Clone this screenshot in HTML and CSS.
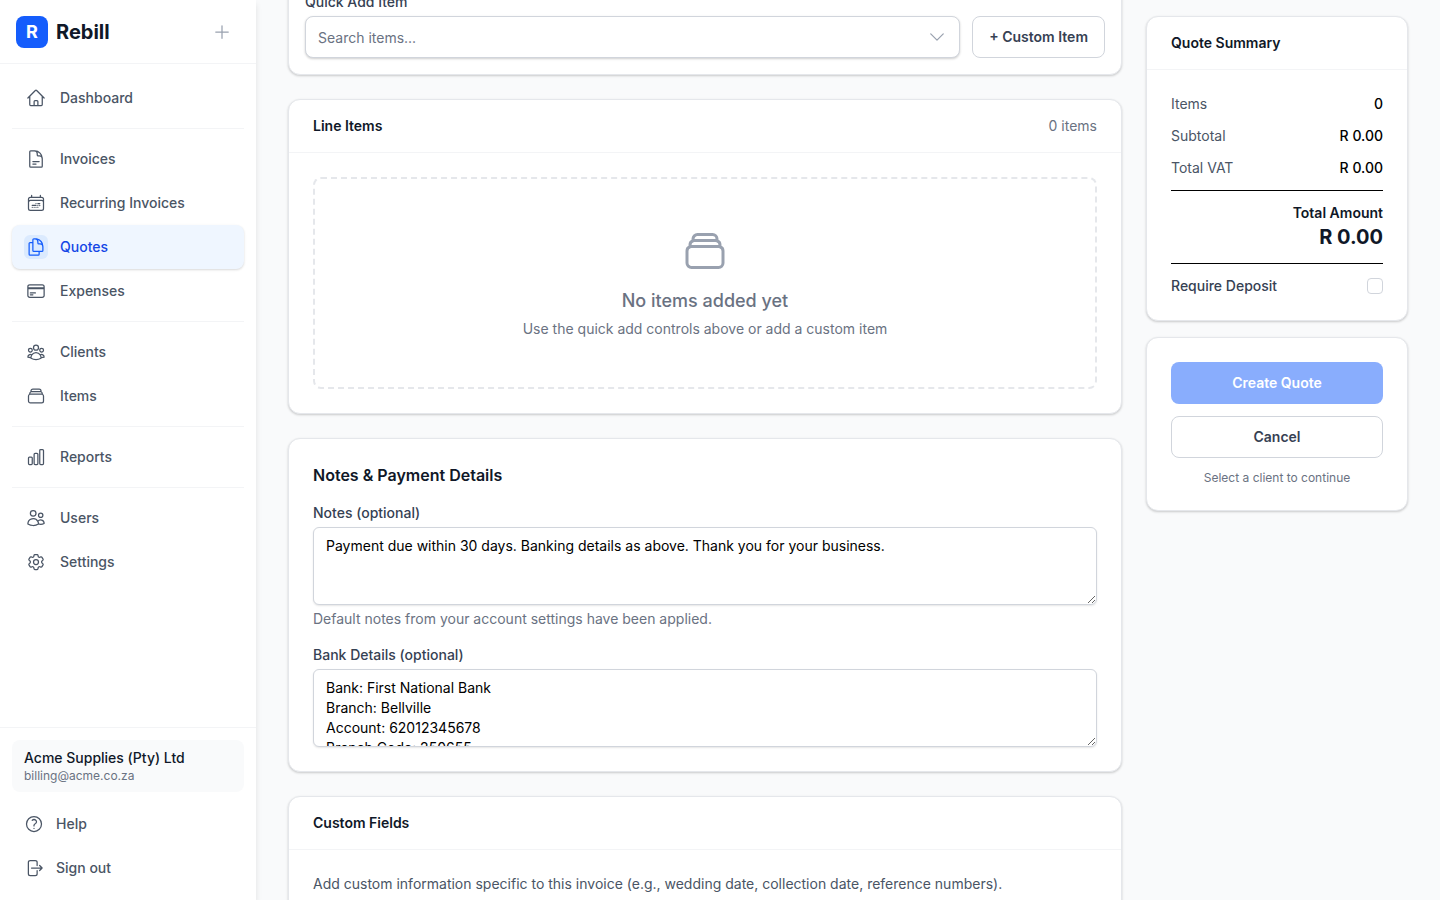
FILE: index.html
```html
<!DOCTYPE html>
<html lang="en">
<head>
<meta charset="UTF-8">
<meta name="viewport" content="width=device-width, initial-scale=1.0">
<title>New Quote - Rebill</title>
<link rel="stylesheet" href="styles.css">
</head>
<body>
<div class="app">
    <aside class="sidebar">
        <div class="sidebar-header">
            <a href="#" class="brand">
                <span class="brand-logo">R</span>
                <span class="brand-name">Rebill</span>
            </a>
            <button class="create-btn" type="button" aria-label="Create new">
                <svg class="icon" viewBox="0 0 24 24"><path d="M12 4.5v15m7.5-7.5h-15"/></svg>
            </button>
        </div>
        <nav class="nav">
            <div class="nav-group">
                <a href="#" class="nav-link">
                    <span class="nav-icon"><svg class="icon" viewBox="0 0 24 24"><path d="m2.25 12 8.954-8.955c.44-.439 1.152-.439 1.591 0L21.75 12M4.5 9.75v10.125c0 .621.504 1.125 1.125 1.125H9.75v-4.875c0-.621.504-1.125 1.125-1.125h2.25c.621 0 1.125.504 1.125 1.125V21h4.125c.621 0 1.125-.504 1.125-1.125V9.75M8.25 21h8.25"/></svg></span>
                    Dashboard
                </a>
            </div>
            <div class="nav-group">
                <a href="#" class="nav-link">
                    <span class="nav-icon"><svg class="icon" viewBox="0 0 24 24"><path d="M19.5 14.25v-2.625a3.375 3.375 0 0 0-3.375-3.375h-1.5A1.125 1.125 0 0 1 13.5 7.125v-1.5a3.375 3.375 0 0 0-3.375-3.375H8.25m0 12.75h7.5m-7.5 3H12M10.5 2.25H5.625c-.621 0-1.125.504-1.125 1.125v17.25c0 .621.504 1.125 1.125 1.125h12.75c.621 0 1.125-.504 1.125-1.125V11.25a9 9 0 0 0-9-9Z"/></svg></span>
                    Invoices
                </a>
                <a href="#" class="nav-link">
                    <span class="nav-icon"><svg class="icon" viewBox="0 0 24 24"><path d="M6.75 2.994v2.25m10.5-2.25v2.25m-14.252 13.5V7.491a2.25 2.25 0 0 1 2.25-2.25h13.5a2.25 2.25 0 0 1 2.25 2.25v11.251m-18 0a2.25 2.25 0 0 0 2.25 2.25h13.5a2.25 2.25 0 0 0 2.25-2.25m-18 0v-7.5a2.25 2.25 0 0 1 2.25-2.25h13.5a2.25 2.25 0 0 1 2.25 2.25v7.5m-6.75-6h2.25m-9 2.25h4.5m.002-2.25h.005v.006H12v-.006Zm-.001 4.5h.006v.006h-.006v-.005Zm-2.25.001h.005v.006H9.75v-.006Zm-2.25 0h.005v.005h-.006v-.005Zm6.75-2.247h.005v.005h-.005v-.005Zm0 2.247h.006v.006h-.006v-.006Zm2.25-2.248h.006V15H16.5v-.005Z"/></svg></span>
                    Recurring Invoices
                </a>
                <a href="#" class="nav-link active">
                    <span class="nav-icon"><svg class="icon" viewBox="0 0 24 24"><path d="M15.75 17.25v3.375c0 .621-.504 1.125-1.125 1.125h-9.75a1.125 1.125 0 0 1-1.125-1.125V7.875c0-.621.504-1.125 1.125-1.125H6.75a9.06 9.06 0 0 1 1.5.124m7.5 10.376h3.375c.621 0 1.125-.504 1.125-1.125V11.25c0-4.46-3.243-8.161-7.5-8.876a9.06 9.06 0 0 0-1.5-.124H9.375c-.621 0-1.125.504-1.125 1.125v3.5m7.5 10.375H9.375a1.125 1.125 0 0 1-1.125-1.125v-9.25m12 6.625v-1.875a3.375 3.375 0 0 0-3.375-3.375h-1.5a1.125 1.125 0 0 1-1.125-1.125v-1.5a3.375 3.375 0 0 0-3.375-3.375H9.75"/></svg></span>
                    Quotes
                </a>
                <a href="#" class="nav-link">
                    <span class="nav-icon"><svg class="icon" viewBox="0 0 24 24"><path d="M2.25 8.25h19.5M2.25 9h19.5m-16.5 5.25h6m-6 2.25h3m-3.75 3h15a2.25 2.25 0 0 0 2.25-2.25V6.75A2.25 2.25 0 0 0 19.5 4.5h-15a2.25 2.25 0 0 0-2.25 2.25v10.5A2.25 2.25 0 0 0 4.5 19.5Z"/></svg></span>
                    Expenses
                </a>
            </div>
            <div class="nav-group">
                <a href="#" class="nav-link">
                    <span class="nav-icon"><svg class="icon" viewBox="0 0 24 24"><path d="M18 18.72a9.094 9.094 0 0 0 3.741-.479 3 3 0 0 0-4.682-2.72m.94 3.198.001.031c0 .225-.012.447-.037.666A11.944 11.944 0 0 1 12 21c-2.17 0-4.207-.576-5.963-1.584A6.062 6.062 0 0 1 6 18.719m12 0a5.971 5.971 0 0 0-.941-3.197m0 0A5.995 5.995 0 0 0 12 12.75a5.995 5.995 0 0 0-5.058 2.772m0 0a3 3 0 0 0-4.681 2.72 8.986 8.986 0 0 0 3.74.477m.94-3.197a5.971 5.971 0 0 0-.94 3.197M15 6.75a3 3 0 1 1-6 0 3 3 0 0 1 6 0Zm6 3a2.25 2.25 0 1 1-4.5 0 2.25 2.25 0 0 1 4.5 0Zm-13.5 0a2.25 2.25 0 1 1-4.5 0 2.25 2.25 0 0 1 4.5 0Z"/></svg></span>
                    Clients
                </a>
                <a href="#" class="nav-link">
                    <span class="nav-icon"><svg class="icon" viewBox="0 0 24 24"><path d="M6 6.878V6a2.25 2.25 0 0 1 2.25-2.25h7.5A2.25 2.25 0 0 1 18 6v.878m-12 0c.235-.083.487-.128.75-.128h10.5c.263 0 .515.045.75.128m-12 0A2.25 2.25 0 0 0 4.5 9v.878m13.5-3A2.25 2.25 0 0 1 19.5 9v.878m0 0a2.246 2.246 0 0 0-.75-.128H5.25c-.263 0-.515.045-.75.128m15 0A2.25 2.25 0 0 1 21 12v6a2.25 2.25 0 0 1-2.25 2.25H5.25A2.25 2.25 0 0 1 3 18v-6c0-.98.626-1.813 1.5-2.122"/></svg></span>
                    Items
                </a>
            </div>
            <div class="nav-group">
                <a href="#" class="nav-link">
                    <span class="nav-icon"><svg class="icon" viewBox="0 0 24 24"><path d="M3 13.125C3 12.504 3.504 12 4.125 12h2.25c.621 0 1.125.504 1.125 1.125v6.75C7.5 20.496 6.996 21 6.375 21h-2.25A1.125 1.125 0 0 1 3 19.875v-6.75ZM9.75 8.625c0-.621.504-1.125 1.125-1.125h2.25c.621 0 1.125.504 1.125 1.125v11.25c0 .621-.504 1.125-1.125 1.125h-2.25a1.125 1.125 0 0 1-1.125-1.125V8.625ZM16.5 4.125c0-.621.504-1.125 1.125-1.125h2.25C20.496 3 21 3.504 21 4.125v15.75c0 .621-.504 1.125-1.125 1.125h-2.25a1.125 1.125 0 0 1-1.125-1.125V4.125Z"/></svg></span>
                    Reports
                </a>
            </div>
            <div class="nav-group">
                <a href="#" class="nav-link">
                    <span class="nav-icon"><svg class="icon" viewBox="0 0 24 24"><path d="M15 19.128a9.38 9.38 0 0 0 2.625.372 9.337 9.337 0 0 0 4.121-.952 4.125 4.125 0 0 0-7.533-2.493M15 19.128v-.003c0-1.113-.285-2.16-.786-3.07M15 19.128v.106A12.318 12.318 0 0 1 8.624 21c-2.331 0-4.512-.645-6.374-1.766l-.001-.109a6.375 6.375 0 0 1 11.964-3.07M12 6.375a3.375 3.375 0 1 1-6.75 0 3.375 3.375 0 0 1 6.75 0Zm8.25 2.25a2.625 2.625 0 1 1-5.25 0 2.625 2.625 0 0 1 5.25 0Z"/></svg></span>
                    Users
                </a>
                <a href="#" class="nav-link">
                    <span class="nav-icon"><svg class="icon" viewBox="0 0 24 24"><path d="M9.594 3.94c.09-.542.56-.94 1.11-.94h2.593c.55 0 1.02.398 1.11.94l.213 1.281c.063.374.313.686.645.87.074.04.147.083.22.127.325.196.72.257 1.075.124l1.217-.456a1.125 1.125 0 0 1 1.37.49l1.296 2.247a1.125 1.125 0 0 1-.26 1.431l-1.003.827c-.293.241-.438.613-.43.992a7.723 7.723 0 0 1 0 .255c-.008.378.137.75.43.991l1.004.827c.424.35.534.955.26 1.43l-1.298 2.247a1.125 1.125 0 0 1-1.369.491l-1.217-.456c-.355-.133-.75-.072-1.076.124a6.47 6.47 0 0 1-.22.128c-.331.183-.581.495-.644.869l-.213 1.281c-.09.543-.56.94-1.11.94h-2.594c-.55 0-1.019-.398-1.11-.94l-.213-1.281c-.062-.374-.312-.686-.644-.87a6.52 6.52 0 0 1-.22-.127c-.325-.196-.72-.257-1.076-.124l-1.217.456a1.125 1.125 0 0 1-1.369-.49l-1.297-2.247a1.125 1.125 0 0 1 .26-1.431l1.004-.827c.292-.24.437-.613.43-.991a6.932 6.932 0 0 1 0-.255c.007-.38-.138-.751-.43-.992l-1.004-.827a1.125 1.125 0 0 1-.26-1.43l1.297-2.247a1.125 1.125 0 0 1 1.37-.491l1.216.456c.356.133.751.072 1.076-.124.072-.044.146-.086.22-.128.332-.183.582-.495.644-.869l.214-1.28ZM15 12a3 3 0 1 1-6 0 3 3 0 0 1 6 0Z"/></svg></span>
                    Settings
                </a>
            </div>
        </nav>
        <div class="sidebar-footer">
            <div class="account">
                <div class="account-name">Acme Supplies (Pty) Ltd</div>
                <div class="account-email">billing@acme.co.za</div>
            </div>
            <a href="#" class="nav-link">
                <svg class="icon" viewBox="0 0 24 24"><path d="M9.879 7.519c1.171-1.025 3.071-1.025 4.242 0 1.172 1.025 1.172 2.687 0 3.712-.203.179-.43.326-.67.442-.745.361-1.45.999-1.45 1.827v.75M21 12a9 9 0 1 1-18 0 9 9 0 0 1 18 0Zm-9 5.25h.008v.008H12v-.008Z"/></svg>
                Help
            </a>
            <button class="nav-link" type="button">
                <svg class="icon" viewBox="0 0 24 24"><path d="M15.75 9V5.25A2.25 2.25 0 0 0 13.5 3h-6a2.25 2.25 0 0 0-2.25 2.25v13.5A2.25 2.25 0 0 0 7.5 21h6a2.25 2.25 0 0 0 2.25-2.25V15m3 0 3-3m0 0-3-3m3 3H9"/></svg>
                Sign out
            </button>
        </div>
    </aside>

    <main class="content">
        <form class="quote-form">
            <div class="form-column">
                <section class="card quick-add">
                    <label for="quick-add">Quick Add Item</label>
                    <div class="quick-add-row">
                        <div class="combobox">
                            <input id="quick-add" type="text" placeholder="Search items..." autocomplete="off">
                            <svg class="icon chevron" viewBox="0 0 24 24"><path d="m19.5 8.25-7.5 7.5-7.5-7.5"/></svg>
                        </div>
                        <button class="btn" type="button">+ Custom Item</button>
                    </div>
                </section>

                <section class="card">
                    <div class="card-header">
                        <h3>Line Items</h3>
                        <span class="item-count">0 items</span>
                    </div>
                    <div class="card-body">
                        <div class="empty-state">
                            <svg class="icon" viewBox="0 0 24 24"><path d="M6 6.878V6a2.25 2.25 0 0 1 2.25-2.25h7.5A2.25 2.25 0 0 1 18 6v.878m-12 0c.235-.083.487-.128.75-.128h10.5c.263 0 .515.045.75.128m-12 0A2.25 2.25 0 0 0 4.5 9v.878m13.5-3A2.25 2.25 0 0 1 19.5 9v.878m0 0a2.246 2.246 0 0 0-.75-.128H5.25c-.263 0-.515.045-.75.128m15 0A2.25 2.25 0 0 1 21 12v6a2.25 2.25 0 0 1-2.25 2.25H5.25A2.25 2.25 0 0 1 3 18v-6c0-.98.626-1.813 1.5-2.122"/></svg>
                            <p class="empty-title">No items added yet</p>
                            <p class="empty-text">Use the quick add controls above or add a custom item</p>
                        </div>
                    </div>
                </section>

                <section class="card card-body">
                    <h2>Notes &amp; Payment Details</h2>
                    <div class="field">
                        <label for="notes">Notes (optional)</label>
                        <textarea id="notes" rows="3">Payment due within 30 days. Banking details as above. Thank you for your business.</textarea>
                        <p class="hint">Default notes from your account settings have been applied.</p>
                    </div>
                    <div class="field">
                        <label for="bank">Bank Details (optional)</label>
                        <textarea id="bank" rows="3">Bank: First National Bank
Branch: Bellville
Account: 62012345678
Branch Code: 250655</textarea>
                    </div>
                </section>

                <section class="card">
                    <div class="card-header">
                        <h3>Custom Fields</h3>
                    </div>
                    <div class="card-body">
                        <p class="card-text">Add custom information specific to this invoice (e.g., wedding date, collection date, reference numbers).</p>
                    </div>
                </section>
            </div>

            <div class="summary-column">
                <section class="card">
                    <div class="card-header">
                        <h3>Quote Summary</h3>
                    </div>
                    <div class="card-body summary">
                        <div class="summary-row"><span>Items</span><strong>0</strong></div>
                        <div class="summary-row"><span>Subtotal</span><strong>R 0.00</strong></div>
                        <div class="summary-row"><span>Total VAT</span><strong>R 0.00</strong></div>
                        <div class="total">
                            <div class="total-label">Total Amount</div>
                            <div class="total-value">R 0.00</div>
                        </div>
                        <div class="summary-row">
                            <label for="deposit">Require Deposit</label>
                            <input id="deposit" type="checkbox">
                        </div>
                    </div>
                </section>

                <section class="card card-body actions">
                    <button class="btn btn-primary" type="submit" disabled>Create Quote</button>
                    <button class="btn" type="button">Cancel</button>
                    <p class="actions-hint">Select a client to continue</p>
                </section>
            </div>
        </form>
    </main>
</div>
</body>
</html>
```
FILE: styles.css
```css
* {
    margin: 0;
    padding: 0;
    box-sizing: border-box;
}

body {
    font-family: Inter, "Liberation Sans", sans-serif;
    font-size: 14px;
    line-height: 20px;
    color: #101828;
    background: #f9fafb;
}

button, input, textarea {
    font: inherit;
}

a {
    color: inherit;
    text-decoration: none;
}

.icon {
    width: 20px;
    height: 20px;
    flex-shrink: 0;
    fill: none;
    stroke: currentColor;
    stroke-width: 1.5;
    stroke-linecap: round;
    stroke-linejoin: round;
}

.app {
    display: flex;
    height: 100vh;
    overflow: hidden;
}

/* SIDEBAR */
.sidebar {
    width: 256px;
    flex-shrink: 0;
    display: flex;
    flex-direction: column;
    background: #fff;
    box-shadow: 0 4px 6px rgba(0, 0, 0, 0.1);
}

.sidebar-header {
    display: flex;
    align-items: center;
    justify-content: space-between;
    height: 64px;
    padding: 0 24px 0 16px;
    border-bottom: 1px solid #f3f4f6;
}

.brand {
    display: flex;
    align-items: center;
    gap: 8px;
}

.brand-logo {
    width: 32px;
    height: 32px;
    border-radius: 8px;
    background: #155dfc;
    color: #fff;
    font-size: 18px;
    font-weight: 700;
    line-height: 32px;
    text-align: center;
}

.brand-name {
    font-size: 20px;
    font-weight: 700;
    line-height: 28px;
}

.create-btn {
    display: flex;
    padding: 0;
    border: none;
    background: none;
    color: #99a1af;
    cursor: pointer;
    width: 20px;
    height: 20px;
}

.nav {
    flex: 1;
    padding: 12px;
}

.nav-group + .nav-group {
    margin-top: 8px;
    padding-top: 8px;
    border-top: 1px solid #f3f4f6;
}

.nav-link {
    display: flex;
    align-items: center;
    gap: 12px;
    width: 100%;
    height: 44px;
    padding: 0 12px;
    border: none;
    border-radius: 8px;
    background: none;
    color: #4a5565;
    font-weight: 500;
    cursor: pointer;
}

.nav-link:hover {
    background: #f9fafb;
}

.nav-icon {
    display: flex;
    padding: 2px;
    border-radius: 6px;
}

.nav-link.active {
    background: #eff6ff;
    color: #1447e6;
    box-shadow: 0 1px 3px rgba(0, 0, 0, 0.1), 0 1px 2px rgba(0, 0, 0, 0.06);
}

.nav-link.active .nav-icon {
    background: #dbeafe;
    color: #155dfc;
}

.sidebar-footer {
    padding: 12px 12px 10px;
    border-top: 1px solid #f3f4f6;
}

.account {
    margin-bottom: 10px;
    padding: 8px 12px;
    border-radius: 8px;
    background: #f9fafb;
}

.account-name {
    font-weight: 500;
}

.account-email {
    font-size: 12px;
    line-height: 16px;
    color: #6a7282;
}

/* CONTENT */
.content {
    flex: 1;
    min-width: 0;
    padding: 0 32px;
}

.quote-form {
    display: grid;
    grid-template-columns: repeat(4, minmax(0, 1fr));
    gap: 24px;
    align-items: start;
}

.form-column {
    grid-column: span 3;
    display: flex;
    flex-direction: column;
    gap: 24px;
    margin-top: -25px;
}

.card {
    background: #fff;
    border: 1px solid #e5e7eb;
    border-radius: 12px;
    box-shadow: 0 1px 3px rgba(0, 0, 0, 0.1), 0 1px 2px rgba(0, 0, 0, 0.1);
}

.card-header {
    display: flex;
    justify-content: space-between;
    padding: 16px 24px;
    border-bottom: 1px solid #f3f4f6;
}

.card-body {
    padding: 24px;
}

h2 {
    font-size: 16px;
    font-weight: 600;
    line-height: 24px;
}

h3 {
    font-size: 14px;
    font-weight: 600;
}

label {
    display: block;
    color: #364153;
    font-weight: 500;
}

/* QUICK ADD */
.quick-add {
    padding: 16px;
}

.quick-add-row {
    display: flex;
    gap: 12px;
    margin-top: 4px;
}

.combobox {
    position: relative;
    flex: 1;
}

.combobox input {
    display: block;
    width: 100%;
    height: 42px;
    padding: 0 40px 0 12px;
    border: 1px solid #d1d5dc;
    border-radius: 8px;
    background: #fff;
    box-shadow: 0 1px 3px rgba(0, 0, 0, 0.1), 0 1px 2px rgba(0, 0, 0, 0.1);
}

.combobox input::placeholder {
    color: #6a7282;
}

.chevron {
    position: absolute;
    right: 13px;
    top: 11px;
    color: #99a1af;
    pointer-events: none;
}

.btn {
    height: 42px;
    padding: 0 16px;
    border: 1px solid #d1d5dc;
    border-radius: 8px;
    background: #fff;
    color: #364153;
    font-weight: 600;
    cursor: pointer;
}

.btn-primary {
    border: none;
    background: #155dfc;
    color: #fff;
}

.btn-primary:disabled {
    opacity: 0.5;
    cursor: not-allowed;
}

/* LINE ITEMS */
.item-count {
    color: #6a7282;
}

.empty-state {
    display: flex;
    flex-direction: column;
    align-items: center;
    padding: 48px 24px;
    border: 2px dashed #e5e7eb;
    border-radius: 8px;
    color: #6a7282;
    text-align: center;
}

.empty-state .icon {
    width: 48px;
    height: 48px;
    color: #99a1af;
}

.empty-title {
    margin-top: 12px;
    font-size: 18px;
    font-weight: 500;
    line-height: 28px;
}

.empty-text {
    margin-top: 4px;
}

/* NOTES */
.field {
    margin-top: 16px;
}

textarea {
    display: block;
    width: 100%;
    height: 78px;
    margin-top: 4px;
    padding: 8px 12px;
    border: 1px solid #d1d5dc;
    border-radius: 6px;
    background: #fff;
    color: #000;
    box-shadow: 0 1px 2px rgba(0, 0, 0, 0.1);
    resize: vertical;
    overflow: hidden;
}

.hint {
    margin-top: 4px;
    color: #6a7282;
}

.card-text {
    color: #4a5565;
}

/* SUMMARY */
.summary-column {
    display: flex;
    flex-direction: column;
    gap: 16px;
    padding-top: 16px;
}

.summary {
    display: flex;
    flex-direction: column;
    gap: 12px;
}

.summary-row {
    display: flex;
    align-items: center;
    justify-content: space-between;
    color: #4a5565;
}

.summary-row strong {
    color: #000;
    font-weight: 500;
}

.total {
    padding: 12px 0;
    border-top: 1px solid #000;
    border-bottom: 1px solid #000;
    text-align: right;
}

.total-label {
    font-weight: 600;
}

.total-value {
    font-size: 20px;
    font-weight: 700;
    line-height: 28px;
}

input[type="checkbox"] {
    appearance: none;
    width: 16px;
    height: 16px;
    border: 1px solid #d1d5dc;
    border-radius: 4px;
    background: #fff;
}

input[type="checkbox"]:checked {
    border-color: #155dfc;
    background: #155dfc;
}

.actions {
    display: flex;
    flex-direction: column;
    gap: 12px;
}

.actions-hint {
    font-size: 12px;
    line-height: 16px;
    color: #6a7282;
    text-align: center;
}

@media (max-width: 900px) {
    .app {
        flex-direction: column;
        height: auto;
    }

    .sidebar {
        width: 100%;
    }

    .content {
        padding: 24px 16px;
    }

    .form-column {
        margin-top: 0;
    }

    .quote-form {
        display: flex;
        flex-direction: column;
        align-items: stretch;
    }
}
```
